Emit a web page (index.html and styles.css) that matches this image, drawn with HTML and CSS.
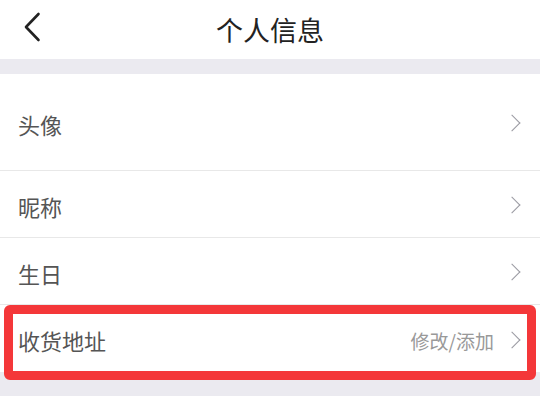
FILE: index.html
```html
<!DOCTYPE html>
<html>
<head>
	<meta charset="utf-8">
	<title>个人信息</title>
	<link rel="stylesheet" href="styles.css">
</head>
<body>
	<div class="bar">
		<a href="javascript://" class="bar__back">
			<svg width="18" height="30" viewBox="0 0 18 30"><path d="M15.5 2 L3 15 L15.5 28" fill="none" stroke="#222" stroke-width="2.6" stroke-linecap="round" stroke-linejoin="round"/></svg>
		</a>
		<h1>个人信息</h1>
	</div>

	<div class="gap"></div>

	<div class="list">
		<div class="item item--tall">
			<span class="item__label">头像</span>
			<span class="item__arrow"></span>
		</div>
		<div class="item">
			<span class="item__label">昵称</span>
			<span class="item__arrow"></span>
		</div>
		<div class="item">
			<span class="item__label">生日</span>
			<span class="item__arrow"></span>
		</div>
		<div class="item item--marked">
			<span class="item__label">收货地址</span>
			<span class="item__value">修改/添加</span>
			<span class="item__arrow"></span>
		</div>
	</div>
</body>
</html>
```

FILE: styles.css
```css
body {
	font-family: "Noto Sans CJK SC", "Noto Sans", sans-serif;
	color: #222;
	background-color: #ebeaf0;
	margin: 0;
	width: 540px;
	height: 396px;
	overflow: hidden;
}

.bar {
	display: flex;
	align-items: center;
	justify-content: center;
	height: 59px;
	background-color: #fff;
	position: relative;
}

.bar h1 {
	margin: 0;
	font-size: 27px;
	font-weight: normal;
	color: #222;
	line-height: 1;
	padding-top: 0;
}

.bar__back {
	position: absolute;
	left: 23px;
	top: 12px;
	display: block;
	width: 18px;
	height: 30px;
}

.bar__back svg {
	display: block;
}

.gap {
	height: 15px;
}

.list {
	background-color: #fff;
}

.item {
	display: flex;
	align-items: center;
	box-sizing: border-box;
	height: 67px;
	padding: 0 20px 0 18px;
	border-bottom: 1px solid #e8e8e8;
	position: relative;
}

.item--tall {
	height: 97px;
}

.item:last-child {
	border-bottom: none;
	height: 67px;
}

.item__label {
	flex: 1;
	font-size: 22px;
	color: #555;
	line-height: 1;
	padding-top: 3px;
}

.item__value {
	font-size: 19px;
	color: #999;
	line-height: 1;
	margin-right: 12px;
	padding-top: 3px;
}

.item__arrow {
	display: block;
	width: 11px;
	height: 11px;
	border-top: 1.5px solid #9a9aa2;
	border-right: 1.5px solid #9a9aa2;
	transform: rotate(45deg);
	margin-right: 2px;
	margin-top: 2px;
}

.item--marked::after {
	content: "";
	position: absolute;
	top: 0;
	left: 4px;
	right: 4px;
	height: 75px;
	box-sizing: border-box;
	border: 9px solid #f43739;
	border-radius: 6px;
}
```
